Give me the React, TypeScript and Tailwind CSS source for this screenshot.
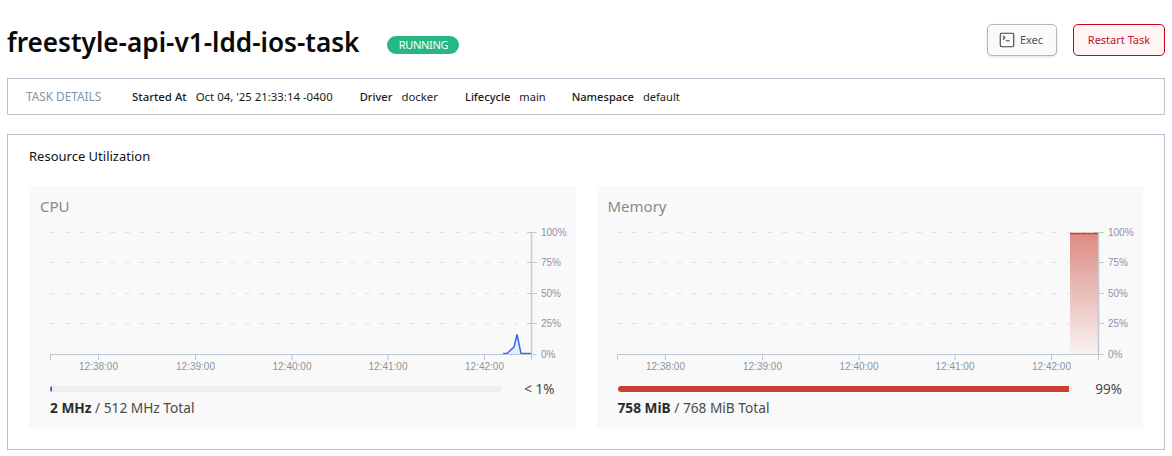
import { SquareTerminal } from "lucide-react";

const times = [
  { x: 58.5, label: "12:38:00" },
  { x: 155.5, label: "12:39:00" },
  { x: 252, label: "12:40:00" },
  { x: 348, label: "12:41:00" },
  { x: 444.5, label: "12:42:00" },
];

const levels = [
  { y: 10.5, label: "100%" },
  { y: 40.5, label: "75%" },
  { y: 71.5, label: "50%" },
  { y: 101.5, label: "25%" },
  { y: 132.5, label: "0%" },
];

function Chart({ id, children }: { id: string; children: React.ReactNode }) {
  return (
    <svg width="530" height="156" className="block text-[10px]" style={{ fontFamily: "'Liberation Sans', sans-serif" }} data-chart={id}>
      {levels.slice(0, 4).map((l) => (
        <g key={l.y}>
          <line x1="10" x2="478" y1={l.y} y2={l.y} stroke="#dfe2e8" strokeDasharray="5 10" />
          <line x1="487" x2="497" y1={l.y} y2={l.y} stroke="#c3cad6" />
        </g>
      ))}
      {children}
      <path d="M10.5 138V132.5H491.5V138M491.5 132.5V10.5" fill="none" stroke="#bcc5d3" strokeWidth="1" />
      <line x1="491.5" x2="491.5" y1="10" y2="133" stroke="#c3cad6" strokeWidth="1.5" />
      <line x1="491" x2="497" y1="132.5" y2="132.5" stroke="#c3cad6" />
      {times.map((t) => (
        <g key={t.label}>
          <line x1={t.x} x2={t.x} y1="132" y2="138" stroke="#bcc5d3" />
          <text x={t.x} y="148" textAnchor="middle" fill="#8d93a0">
            {t.label}
          </text>
        </g>
      ))}
      {levels.map((l) => (
        <text key={l.label} x="501" y={l.y + 3.5} fill="#8d93a6">
          {l.label}
        </text>
      ))}
    </svg>
  );
}

function Panel({
  title,
  chart,
  fill,
  fillClass,
  percent,
  used,
  total,
}: {
  title: string;
  chart: React.ReactNode;
  fill: string;
  fillClass: string;
  percent: string;
  used: string;
  total: string;
}) {
  return (
    <div className="h-[242px] bg-[#f9f9f9] pt-[9px] flex flex-col">
      <div className="pl-[11px] text-[15px] leading-[22px] text-[#8a8a8a]">{title}</div>
      <div className="pl-[11px] mt-[5px]">{chart}</div>
      <div className="flex items-center gap-[22px] pl-[21px] pr-[21px] mt-[1px] h-[20px]">
        <div className="flex-1 h-[6px] rounded-full bg-[#eeeeee] overflow-hidden">
          <div className={`h-full ${fillClass}`} style={{ width: fill }} />
        </div>
        <div className="text-[13.5px] text-[#4a4a4a]">{percent}</div>
      </div>
      <div className="pl-[21px] text-[13.7px] leading-[18px] text-[#4a4a4a]">
        <span className="font-bold text-[#2b2b2b]">{used}</span> / {total}
      </div>
    </div>
  );
}

export default function App() {
  return (
    <div className="w-[1172px] h-[456px] bg-white px-[7px] overflow-hidden font-['Noto_Sans',sans-serif]">
      <div className="h-[78px] flex items-center pt-[2px]">
        <h1 className="text-[26.15px] font-semibold leading-[32px] text-[#0a0a0a] mt-[4px]">freestyle-api-v1-ldd-ios-task</h1>
        <span className="ml-[28px] mt-[10px] h-[18px] w-[72px] rounded-full bg-[#25b884] text-white text-[11px] tracking-[-0.3px] leading-[18px] text-center">RUNNING</span>
        <div className="ml-auto flex gap-[16px]">
          <button className="w-[70px] h-[32px] flex items-center justify-center gap-[4px] pr-[3px] rounded-[5px] border border-[#b5b5b5] bg-[#fafafa] text-[11px] text-[#4a5568] shadow-sm">
            <SquareTerminal size={18} strokeWidth={1.5} className="text-[#444444]" />
            Exec
          </button>
          <button className="w-[92px] h-[32px] rounded-[5px] border border-[#d0021b] bg-[#fff5f5] text-[11px] text-[#c4102a]">
            Restart Task
          </button>
        </div>
      </div>
      <div className="h-[37px] border border-[#b9c4d2] flex items-center pl-[18px] pt-[1px] text-[11.4px] text-[#1a1a1a]">
        <span className="w-[106px] text-[11.8px] text-[#8492a8]">TASK DETAILS</span>
        <span className="font-medium mr-[9px]">Started At</span>
        <span className="mr-[27px]">Oct 04, '25 21:33:14 -0400</span>
        <span className="font-medium text-[11.1px] mr-[9px]">Driver</span>
        <span className="mr-[27px]">docker</span>
        <span className="font-medium text-[11.1px] mr-[9px]">Lifecycle</span>
        <span className="mr-[26px] text-[11.1px]">main</span>
        <span className="font-medium text-[11.1px] mr-[9px]">Namespace</span>
        <span className="text-[11.1px]">default</span>
      </div>
      <div className="mt-[19px] h-[316px] border border-[#b9c4d2] px-[21px] pt-[12px]">
        <div className="text-[13px] leading-[18px] text-[#111111]">Resource Utilization</div>
        <div className="grid grid-cols-2 gap-[21px] mt-[21px]">
          <Panel
            title="CPU"
            fill="0.5%"
            fillClass="bg-[#2563eb]"
            percent="< 1%"
            used="2 MHz"
            total="512 MHz Total"
            chart={
              <Chart id="cpu">
                <path d="M463 132L467 132L474 125L477 113L481 132L491 132Z" fill="#e8edf8" />
                <path d="M463 131.5L467 131.5L474 125L477 112.5L481 131.5L491 131.5" fill="none" stroke="#2f6bf0" strokeWidth="1.5" />
              </Chart>
            }
          />
          <Panel
            title="Memory"
            fill="99%"
            fillClass="bg-[#c93f32]"
            percent="99%"
            used="758 MiB"
            total="768 MiB Total"
            chart={
              <div className="-ml-px">
                <Chart id="memory">
                  <defs>
                    <linearGradient id="mem" x1="0" y1="0" x2="0" y2="1">
                      <stop offset="0" stopColor="#dc8b82" />
                      <stop offset="1" stopColor="#f8f2f1" />
                    </linearGradient>
                  </defs>
                  <rect x="463" y="11" width="28" height="121" fill="url(#mem)" />
                  <line x1="463" x2="491" y1="11.5" y2="11.5" stroke="#c93f32" strokeWidth="1.5" />
                </Chart>
              </div>
            }
          />
        </div>
      </div>
    </div>
  );
}
